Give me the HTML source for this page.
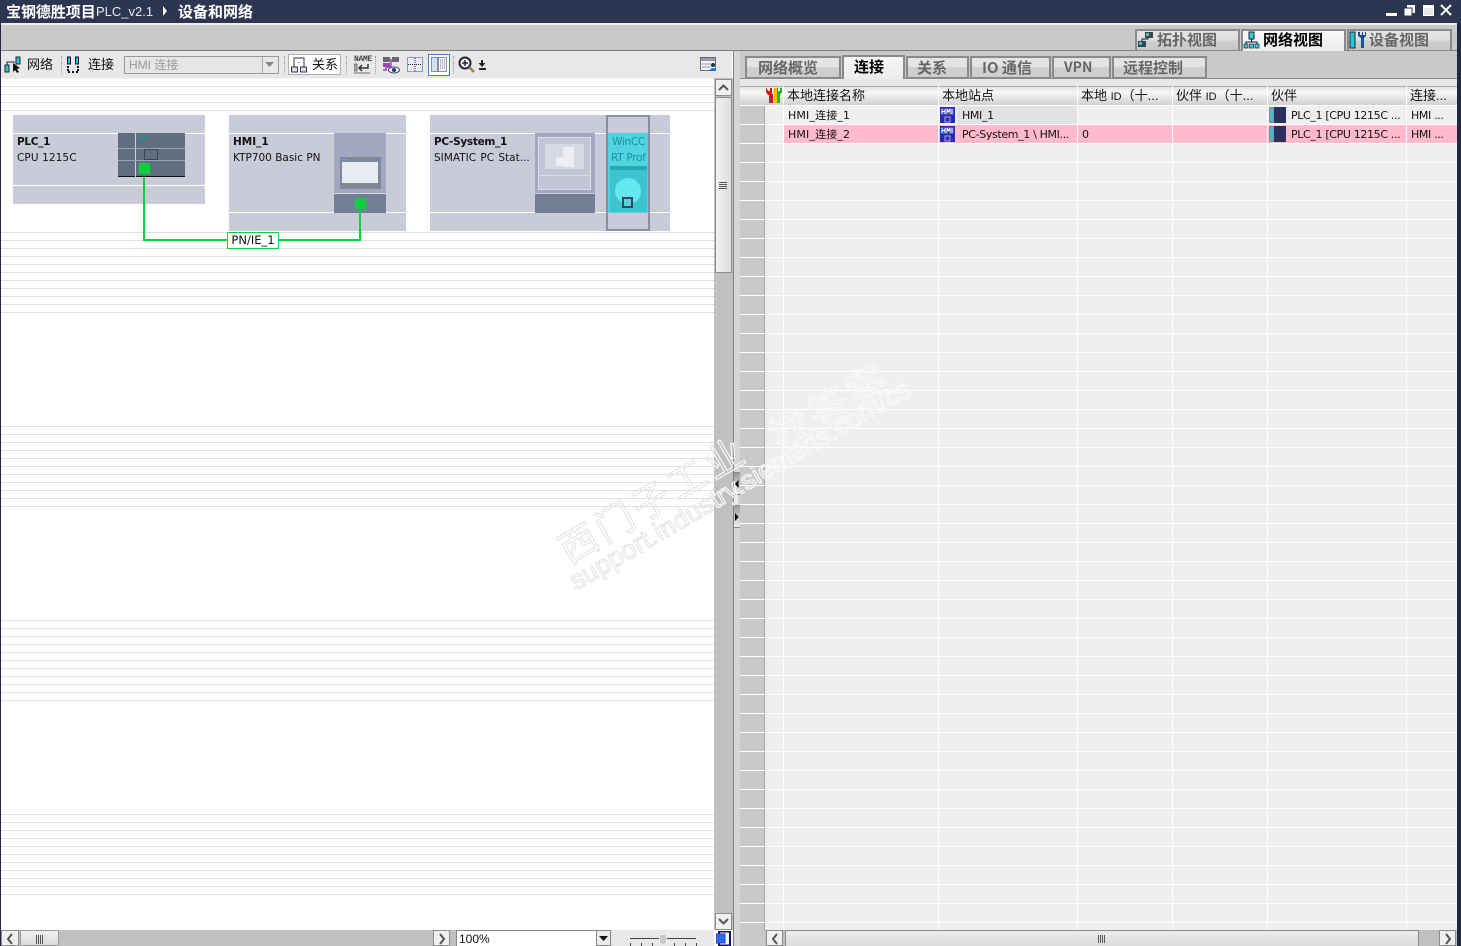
<!DOCTYPE html>
<html><head><meta charset="utf-8">
<style>
html,body{margin:0;padding:0;width:1461px;height:946px;overflow:hidden;background:#fff}
body{position:relative;font-family:"Liberation Sans","WenQuanYi Zen Hei","Noto Sans CJK SC",sans-serif;font-size:12px;color:#000}
div,span,svg{position:absolute;white-space:nowrap;box-sizing:border-box}
.hd span{position:static;font-size:11px}
.tab{background:linear-gradient(#e4e4e4,#e4e4e4 45%,#cfcfcf 50%,#cdcdcd);border:2px solid #8a8a8a;border-bottom-width:1px;color:#666;font-weight:bold;font-size:15px;text-align:left;padding-left:10px;line-height:19px;font-family:"WenQuanYi Zen Hei","Noto Sans CJK SC",sans-serif}
.tab.on{background:linear-gradient(#f6f6f6,#ececec);color:#000;border-bottom:none}
.tt{background:linear-gradient(#e4e4e4,#e0e0e0 45%,#cfcfcf 55%,#c8c8c8);border:2px solid #8a8a8a;border-bottom-width:1px;color:#666;font-weight:bold;font-size:15px;line-height:18px;font-family:"WenQuanYi Zen Hei","Noto Sans CJK SC",sans-serif}
.lines{left:1px;width:713px;height:82px;background:repeating-linear-gradient(#e0e0e0 0,#e0e0e0 1px,#fff 1px,#fff 8px)}
.node{background:#cacbd8}
.hl{height:1px;background:#fff}
.nm{font-family:"DejaVu Sans",sans-serif;font-size:10.5px;color:#111}
.nb{font-weight:bold;letter-spacing:-.3px}
.hd{top:86px;height:19px;line-height:20px;font-size:13px;padding-left:3px;color:#111;border-left:1px solid #fff;overflow:hidden}
.c{font-size:11px;line-height:19px;color:#111;font-family:"DejaVu Sans","WenQuanYi Zen Hei",sans-serif;letter-spacing:-.35px}
.btn{background:#f0f0f0;border:1px solid #8c8c8c}
.wm{-webkit-text-stroke:1.2px #e6e6e6;color:transparent;font-family:"Liberation Sans","WenQuanYi Zen Hei",sans-serif;transform:rotate(-30.3deg);transform-origin:0 0}
.w1{font-size:38px;letter-spacing:4px;line-height:40px}
.w2{font-size:40px;letter-spacing:4px;line-height:40px}
.w3{font-size:26.5px;line-height:30px;letter-spacing:.2px}
.wr{-webkit-text-stroke-color:#f9f9f9}
.sep{top:56px;height:18px;width:1px;border-left:1px dotted #999}
.tl{top:56px;font-size:13px;line-height:17px;color:#111}
</style></head>
<body>
<!-- title bar -->
<div style="left:0;top:0;width:1461px;height:23px;background:#2d3650"></div>
<div style="left:6px;top:2px;color:#fff;font-size:15px;line-height:19px;font-weight:bold;font-family:'WenQuanYi Zen Hei','Noto Sans CJK SC',sans-serif;letter-spacing:-.05px">宝钢德胜项目</div>
<div style="left:96px;top:2px;color:#e8edf8;font-size:13px;line-height:19px">PLC_v2.1</div>
<svg style="left:162px;top:6px" width="6" height="10"><path d="M1 0l4 5-4 5z" fill="#fff"/></svg>
<div style="left:178px;top:2px;color:#fff;font-size:15px;line-height:19px;font-weight:bold;font-family:'WenQuanYi Zen Hei','Noto Sans CJK SC',sans-serif">设备和网络</div>
<svg style="left:1385px;top:4px" width="70" height="14">
<rect x="1" y="9" width="11" height="3" fill="#fff"/>
<rect x="22" y="1" width="8" height="8" fill="#fff"/><rect x="19" y="4" width="8" height="8" fill="#fff" stroke="#2d3650"/>
<rect x="38" y="1" width="11" height="11" fill="#fff"/><rect x="39" y="4" width="9" height="7" fill="#e8e8e8"/>
<path d="M56 1l10 10M66 1L56 11" stroke="#fff" stroke-width="2"/>
</svg>
<!-- upper gray band -->
<div style="left:0;top:23px;width:1457px;height:2px;background:#efefef"></div>
<div style="left:0;top:25px;width:1457px;height:25px;background:#c9c9c9"></div>
<div style="left:0;top:50px;width:1457px;height:1px;background:#7f7f7f"></div>
<!-- top tabs -->
<div class="tt" style="left:1135px;top:29px;width:105px;height:22px;padding-left:20px">拓扑视图</div>
<div class="tt" style="left:1241px;top:29px;width:105px;height:23px;padding-left:20px;background:linear-gradient(#f8f8f8,#ececec);color:#000;border-bottom:none">网络视图</div>
<div class="tt" style="left:1347px;top:29px;width:105px;height:22px;padding-left:20px">设备视图</div>
<svg style="left:1137px;top:31px" width="18" height="18"><rect x="8" y="1" width="8" height="6" fill="#444"/><rect x="9" y="2" width="3" height="3" fill="#3cc"/><rect x="1" y="10" width="8" height="6" fill="#345"/><rect x="2" y="11" width="3" height="3" fill="#3cc"/><path d="M5 10V8h6V7" stroke="#114" fill="none"/></svg>
<svg style="left:1243px;top:31px" width="18" height="18"><rect x="6" y="1" width="5" height="7" fill="#3cc" stroke="#224"/><path d="M8.500 8v3M3 14v-3h11v3" stroke="#114" fill="none"/><rect x="1" y="13" width="4" height="4" fill="#3cc" stroke="#224" stroke-width=".7"/><rect x="6.500" y="13" width="4" height="4" fill="#3cc" stroke="#224" stroke-width=".7"/><rect x="12" y="13" width="4" height="4" fill="#3cc" stroke="#224" stroke-width=".7"/></svg>
<svg style="left:1349px;top:30px" width="18" height="19"><rect x="1" y="2" width="5" height="16" fill="#20c8d8" stroke="#223"/><path d="M9 2v4l3 2v10h3V8l2-2V2l-1 0v3h-2V2h-1v3h-2V2z" fill="#1650a0"/></svg>
<!-- left toolbar -->
<div style="left:1px;top:51px;width:731px;height:27px;background:#e8e8e8"></div>
<div style="left:1px;top:78px;width:713px;height:1px;background:#f4f4f4"></div>
<svg style="left:4px;top:56px" width="18" height="18"><rect x="12" y="1" width="4" height="7" fill="#2cc" stroke="#223"/><rect x="1" y="9" width="4" height="7" fill="#2cc" stroke="#223"/><path d="M3 9V6h8" stroke="#223" fill="none"/><path d="M9 7l7 5-3 1 2 3-2 1-2-3-2 2z" fill="#111"/></svg>
<div class="tl" style="left:27px">网络</div>
<div class="sep" style="left:61px"></div>
<svg style="left:66px;top:56px" width="15" height="18"><rect x="1.500" y="1" width="3" height="7" fill="#2cc" stroke="#113"/><rect x="9.500" y="1" width="3" height="7" fill="#2cc" stroke="#113"/><path d="M2 10v6h3M12 10v6h-3M6 16h2" stroke="#113" stroke-width="2" stroke-dasharray="2 1" fill="none"/></svg>
<div class="tl" style="left:88px">连接</div>
<div style="left:124px;top:56px;width:155px;height:18px;background:#e6e6e6;border:1px solid #9a9a9a;color:#9a9a9a;font-size:12px;line-height:16px;padding-left:4px">HMI 连接</div>
<div style="left:262px;top:57px;width:16px;height:16px;background:#e8e8e8;border-left:1px solid #aaa"></div>
<svg style="left:265px;top:62px" width="10" height="6"><path d="M0 0h9L4.500 5z" fill="#888"/></svg>
<div class="sep" style="left:284px"></div>
<div style="left:288px;top:54px;width:53px;height:21px;background:#fff;border:1px solid #b0b0b0"></div>
<svg style="left:290px;top:56px" width="18" height="18"><path d="M9 6v1M4 11V2h10v9" stroke="#334" fill="none"/><rect x="1.500" y="11" width="6" height="5" fill="#dde" stroke="#334"/><rect x="10.500" y="11" width="6" height="5" fill="#dde" stroke="#334"/></svg>
<div class="tl" style="left:312px">关系</div>
<div class="sep" style="left:346px"></div>
<div style="left:354px;top:56px;font:bold 8px/8px 'Liberation Mono',monospace;color:#444;letter-spacing:-.3px">NAME</div>
<svg style="left:354px;top:63px" width="17" height="11"><rect x="0" y="1" width="3" height="7" fill="#aaa" stroke="#555" stroke-width=".7"/><path d="M14 1v4H6M8 2L5 5l3 3" stroke="#333" stroke-width="1.500" fill="none"/><rect x="0" y="9" width="16" height="2" fill="#aaa"/></svg>
<div class="sep" style="left:375px"></div>
<svg style="left:382px;top:56px" width="18" height="18"><rect x="1" y="1" width="7" height="5" fill="#667"/><rect x="10" y="1" width="7" height="5" fill="#667"/><rect x="1" y="7" width="7" height="4" fill="#a040c0"/><path d="M4 11v3h-3M9 3v8H4" stroke="#a040c0" stroke-width="1.500" fill="none"/><ellipse cx="12" cy="14" rx="5.500" ry="3" fill="#fff" stroke="#445"/><circle cx="12" cy="14" r="2" fill="#1030a0"/></svg>
<svg style="left:406px;top:57px" width="18" height="16"><rect x="1.500" y=".5" width="15" height="14" fill="#e8edf6" stroke="#8a9ac0"/><path d="M2 7.500h14M9 1v13" stroke="#223" stroke-dasharray="1 1"/></svg>
<div style="left:428px;top:54px;width:22px;height:22px;background:#fff;border:1px solid #4a78c8"></div>
<svg style="left:431px;top:57px" width="16" height="16"><rect x=".5" y=".5" width="15" height="14" fill="#f4f6fa" stroke="#7f90b8"/><rect x="1" y="1" width="6" height="13" fill="#d4e0f4"/><path d="M7 .5v14" stroke="#334"/><path d="M9 3h5M9 5h5M9 7h5M9 9h5M9 11h5" stroke="#778" stroke-dasharray="1 1"/></svg>
<div class="sep" style="left:453px"></div>
<svg style="left:458px;top:56px" width="18" height="18"><circle cx="7" cy="7" r="5.500" fill="#fff" stroke="#223" stroke-width="2"/><path d="M4 7h6M7 4v6" stroke="#223" stroke-width="1.500"/><path d="M11 11l5 5" stroke="#a08040" stroke-width="2.500"/></svg>
<svg style="left:478px;top:60px" width="9" height="11"><path d="M3 0h2v3h2.500L4 7 .5 3H3z" fill="#222"/><rect x="1" y="8" width="7" height="2" fill="#222"/></svg>
<svg style="left:700px;top:57px" width="18" height="16"><rect x=".5" y=".5" width="15" height="13" fill="#f0f2fa" stroke="#667"/><rect x="1" y="1" width="14" height="3" fill="#99a"/><path d="M2 7h9M2 10h9" stroke="#99a"/><circle cx="13" cy="8" r="2" fill="#234"/><path d="M10 14c0-4 6-4 6 0z" fill="#1878c0"/></svg>
<!-- canvas background lines -->
<div style="left:1px;top:79px;width:713px;height:851px;background:#fff"></div>
<div class="lines" style="top:86px;height:25px"></div>
<div class="lines" style="top:232px"></div>
<div class="lines" style="top:426px"></div>
<div class="lines" style="top:620px"></div>
<div class="lines" style="top:814px"></div>
<!-- PLC node -->
<div class="node" style="left:13px;top:115px;width:192px;height:89px"></div>
<div class="hl" style="left:13px;top:133px;width:192px"></div>
<div class="hl" style="left:13px;top:185px;width:192px"></div>
<div class="nm nb" style="left:17px;top:136px">PLC_1</div>
<div class="nm" style="left:17px;top:152px;letter-spacing:.1px">CPU 1215C</div>
<div style="left:118px;top:133px;width:67px;height:44px;background:#5f6f80;border-bottom:1px solid #111"></div>
<div style="left:135px;top:133px;width:1px;height:44px;background:#d0d4da"></div>
<div style="left:118px;top:148px;width:67px;height:1px;background:#9aa4b0"></div>
<div style="left:118px;top:160px;width:67px;height:1px;background:#9aa4b0"></div>
<div style="left:144px;top:149px;width:14px;height:11px;border:1px solid #3c4650"></div>
<div style="left:139px;top:137px;width:8px;height:2px;background:#1d9a98"></div>
<!-- HMI node -->
<div class="node" style="left:229px;top:115px;width:177px;height:116px"></div>
<div class="hl" style="left:229px;top:133px;width:177px"></div>
<div class="hl" style="left:229px;top:212px;width:177px"></div>
<div class="nm nb" style="left:233px;top:136px;letter-spacing:0">HMI_1</div>
<div class="nm" style="left:233px;top:152px">KTP700 Basic PN</div>
<div style="left:334px;top:133px;width:52px;height:60px;background:#a3a7bf"></div>
<div style="left:334px;top:193px;width:52px;height:1px;background:#d4d6e0"></div>
<div style="left:334px;top:194px;width:52px;height:19px;background:#737d95"></div>
<div style="left:340px;top:157px;width:41px;height:32px;background:#7f8a98"></div>
<div style="left:342px;top:162px;width:36px;height:21px;background:#e9ebf2"></div>
<div style="left:342px;top:159px;width:6px;height:1px;background:#3bd"></div>
<!-- PC node -->
<div class="node" style="left:430px;top:115px;width:240px;height:116px"></div>
<div class="hl" style="left:430px;top:133px;width:240px"></div>
<div class="hl" style="left:430px;top:212px;width:240px"></div>
<div class="nm nb" style="left:434px;top:136px">PC-System_1</div>
<div class="nm" style="left:434px;top:152px;word-spacing:1px">SIMATIC PC Stat...</div>
<div style="left:535px;top:133px;width:60px;height:60px;background:#a3a7bf"></div>
<div style="left:538px;top:137px;width:53px;height:39px;background:#c3c5d6;border:1px solid #dcdde6"></div>
<div style="left:538px;top:175px;width:53px;height:15px;background:#c3c5d6;border:1px solid #dcdde6"></div>
<div style="left:545px;top:144px;width:39px;height:25px;background:#d6d8e4"></div>
<div style="left:563px;top:147px;width:11px;height:20px;background:#eceef4"></div>
<div style="left:556px;top:157px;width:10px;height:9px;background:#eceef4"></div>
<div style="left:535px;top:194px;width:60px;height:19px;background:#737d95"></div>
<div style="left:606px;top:115px;width:44px;height:116px;border:2px solid #8a90a4"></div>
<div style="left:608px;top:133px;width:40px;height:80px;background:#50d4e0"></div>
<div class="nm" style="left:612px;top:136px;color:#1f8f9f;letter-spacing:-.3px">WinCC</div>
<div class="nm" style="left:611px;top:152px;color:#1f8f9f;letter-spacing:-.3px">RT Prof</div>
<div style="left:610px;top:166px;width:37px;height:4px;background:#28a8b0"></div>
<div style="left:610px;top:170px;width:37px;height:42px;background:#3cc4d0"></div>
<div style="left:615px;top:178px;width:26px;height:26px;border-radius:50%;background:#64e8f0"></div>
<div style="left:622px;top:197px;width:11px;height:11px;border:2px solid #3c4658;background:#50d4e0"></div>
<!-- network -->
<div style="left:143px;top:177px;width:2px;height:64px;background:#0fd03c"></div>
<div style="left:143px;top:239px;width:218px;height:2px;background:#0fd03c"></div>
<div style="left:359px;top:210px;width:2px;height:31px;background:#0fd03c"></div>
<div style="left:139px;top:163px;width:11px;height:11px;background:#0fd03c"></div>
<div style="left:355px;top:198px;width:11px;height:11px;background:#0fd03c"></div>
<div style="left:227px;top:232px;width:52px;height:17px;background:#fff;border:1px solid #0fd03c;font:11.5px/15px 'DejaVu Sans',sans-serif;text-align:center;color:#111">PN/IE_1</div>
<!-- vertical scrollbar -->
<div style="left:714px;top:78px;width:19px;height:852px;background:#c0c0c0"></div>
<div class="btn" style="left:715px;top:79px;width:17px;height:17px"></div>
<svg style="left:718px;top:84px" width="11" height="7"><path d="M1 6l4.500-4.500L10 6" stroke="#555" stroke-width="2" fill="none"/></svg>
<div style="left:715px;top:97px;width:17px;height:176px;background:linear-gradient(90deg,#f2f2f2,#dcdcdc);border:1px solid #8c8c8c"></div>
<div style="left:719px;top:182px;width:8px;height:7px;background:repeating-linear-gradient(#555 0,#555 1px,transparent 1px,transparent 2px)"></div>
<div class="btn" style="left:715px;top:913px;width:17px;height:17px"></div>
<svg style="left:718px;top:918px" width="11" height="7"><path d="M1 1l4.500 4.500L10 1" stroke="#555" stroke-width="2" fill="none"/></svg>
<!-- splitter -->
<div style="left:733px;top:51px;width:1px;height:895px;background:#808080"></div>
<div style="left:734px;top:51px;width:6px;height:895px;background:#d6d6d6"></div>
<div style="left:734px;top:472px;width:6px;height:23px;background:linear-gradient(#999,#eee);border-top:1px solid #888;border-bottom:1px solid #888"></div>
<div style="left:734px;top:505px;width:6px;height:23px;background:linear-gradient(#999,#eee);border-bottom:1px solid #888"></div>
<svg style="left:735px;top:480px" width="4" height="8"><path d="M3.500 0v8L0 4z" fill="#000"/></svg>
<svg style="left:735px;top:513px" width="4" height="8"><path d="M0 0v8l3.500-4z" fill="#000"/></svg>
<!-- right tab strip -->
<div style="left:740px;top:51px;width:717px;height:27px;background:#c9c9c9"></div>
<div style="left:740px;top:78px;width:717px;height:8px;background:#e8e8e8"></div>
<div style="left:740px;top:78px;width:717px;height:1px;background:#8a8a8a"></div>
<div class="tab" style="left:745px;top:56px;width:96px;height:22px;padding-left:11px">网络概览</div>
<div class="tab on" style="left:842px;top:55px;width:63px;height:24px">连接</div>
<div class="tab" style="left:906px;top:56px;width:63px;height:22px;padding-left:9px">关系</div>
<div class="tab" style="left:970px;top:56px;width:81px;height:22px">IO 通信</div>
<div class="tab" style="left:1052px;top:56px;width:59px;height:22px;font-size:14px">VPN</div>
<div class="tab" style="left:1112px;top:56px;width:95px;height:22px;padding-left:9px">远程控制</div>
<!-- table -->
<div style="left:740px;top:86px;width:717px;height:844px;background:#efefef"></div>
<div style="left:740px;top:105px;width:25px;height:825px;background:#c9c9c9;border-right:1px solid #a8a8a8"></div>
<div style="left:740px;top:105px;width:717px;height:825px;background:repeating-linear-gradient(#fff 0,#fff 1px,transparent 1px,transparent 19px)"></div>
<div style="left:783px;top:105px;width:1px;height:825px;background:#fff"></div>
<div style="left:938px;top:105px;width:1px;height:825px;background:#fff"></div>
<div style="left:1077px;top:105px;width:1px;height:825px;background:#fff"></div>
<div style="left:1172px;top:105px;width:1px;height:825px;background:#fff"></div>
<div style="left:1267px;top:105px;width:1px;height:825px;background:#fff"></div>
<div style="left:1406px;top:105px;width:1px;height:825px;background:#fff"></div>
<div style="left:740px;top:86px;width:717px;height:19px;background:linear-gradient(#e4e4e4,#f6f6f6 30%,#d0d0d0);border-top:1px solid #a8a8a8"></div>
<svg style="left:765px;top:87px" width="18" height="17"><path d="M1 2c0 3 1 4 3 5v9h4V7" fill="#d01818"/><path d="M2 1v3h3V1h2v4l-1 3H3L1 5V1z" fill="#d01818"/><path d="M8 5l1-4h3l1 5-1 2v8H9V8z" fill="#f0c000"/><path d="M12 1h1v3h2V1h2v4l-2 3v8h-3z" fill="#30b030"/></svg>
<div class="hd" style="left:783px;width:155px">本地连接名称</div>
<div class="hd" style="left:938px;width:139px">本地站点</div>
<div class="hd" style="left:1077px;width:95px">本地 <span>ID</span>（十...</div>
<div class="hd" style="left:1172px;width:95px">伙伴 <span>ID</span>（十...</div>
<div class="hd" style="left:1267px;width:139px">伙伴</div>
<div class="hd" style="left:1406px;width:51px">连接...</div>
<!-- rows -->
<div style="left:957px;top:106px;width:120px;height:18px;background:#e2e2e2"></div>
<div style="left:784px;top:125px;width:154px;height:18px;background:#ffbbcc"></div>
<div style="left:939px;top:125px;width:138px;height:18px;background:#ffbbcc"></div>
<div style="left:1078px;top:125px;width:94px;height:18px;background:#ffbbcc"></div>
<div style="left:1173px;top:125px;width:94px;height:18px;background:#ffbbcc"></div>
<div style="left:1268px;top:125px;width:138px;height:18px;background:#ffbbcc"></div>
<div style="left:1407px;top:125px;width:50px;height:18px;background:#ffbbcc"></div>
<div class="c" style="left:788px;top:106px;letter-spacing:.15px">HMI_连接_1</div>
<div class="c" style="left:788px;top:125px;letter-spacing:.15px">HMI_连接_2</div>
<div class="c" style="left:962px;top:106px">HMI_1</div>
<div class="c" style="left:962px;top:125px">PC-System_1 \ HMI...</div>
<div class="c" style="left:1082px;top:125px">0</div>
<div class="c" style="left:1291px;top:106px">PLC_1 [CPU 1215C ...</div>
<div class="c" style="left:1291px;top:125px">PLC_1 [CPU 1215C ...</div>
<div class="c" style="left:1411px;top:106px">HMI ...</div>
<div class="c" style="left:1411px;top:125px">HMI ...</div>
<svg style="left:940px;top:107px" width="15" height="16"><rect width="15" height="16" fill="#2a2ab8"/><rect x="1" y="1" width="13" height="7" fill="#4848d8"/><path d="M2 2v5M5 2v5M2 4.500h3M7 7V2l1.500 3L10 2v5M12 2v5" stroke="#fff"/><rect x="5" y="10" width="5" height="5" fill="#2a2ab8" stroke="#aac"/></svg>
<svg style="left:940px;top:126px" width="15" height="16"><rect width="15" height="16" fill="#2a2ab8"/><rect x="1" y="1" width="13" height="7" fill="#4848d8"/><path d="M2 2v5M5 2v5M2 4.500h3M7 7V2l1.500 3L10 2v5M12 2v5" stroke="#fff"/><rect x="5" y="10" width="5" height="5" fill="#2a2ab8" stroke="#aac"/></svg>
<svg style="left:1269px;top:107px" width="17" height="16"><rect width="17" height="16" fill="#2a3060"/><rect x="0" y="0" width="5" height="16" fill="#8a90a0"/><rect x="1.500" y="2" width="2.500" height="12" fill="#30c8d8"/></svg>
<svg style="left:1269px;top:126px" width="17" height="16"><rect width="17" height="16" fill="#2a3060"/><rect x="0" y="0" width="5" height="16" fill="#8a90a0"/><rect x="1.500" y="2" width="2.500" height="12" fill="#30c8d8"/></svg>
<!-- bottom left bar -->
<div style="left:1px;top:930px;width:713px;height:16px;background:#c0c0c0"></div>
<div class="btn" style="left:1px;top:930px;width:18px;height:16px"></div>
<svg style="left:6px;top:933px" width="8" height="12"><path d="M6 1L2 6l4 5" stroke="#555" stroke-width="2" fill="none"/></svg>
<div style="left:20px;top:930px;width:39px;height:16px;background:linear-gradient(#f0f0f0,#dcdcdc);border:1px solid #999"></div>
<div style="left:36px;top:935px;width:7px;height:9px;background:repeating-linear-gradient(90deg,#555 0,#555 1px,transparent 1px,transparent 2px)"></div>
<div class="btn" style="left:433px;top:930px;width:17px;height:16px"></div>
<svg style="left:438px;top:933px" width="8" height="12"><path d="M2 1l4 5-4 5" stroke="#555" stroke-width="2" fill="none"/></svg>
<div style="left:456px;top:930px;width:141px;height:16px;background:#fff;border:1px solid #888;border-bottom:none;font-size:12px;line-height:16px;padding-left:2px;color:#111">100%</div>
<div style="left:596px;top:930px;width:15px;height:16px;background:#ececec;border:1px solid #888"></div>
<svg style="left:599px;top:936px" width="9" height="6"><path d="M0 0h9L4.500 5z" fill="#111"/></svg>
<div style="left:611px;top:930px;width:103px;height:16px;background:#e8e8e8"></div>
<div style="left:630px;top:938px;width:66px;height:1px;background:#444"></div>
<svg style="left:630px;top:933px" width="67" height="13"><path d="M0.500 10v3M11.500 10v3M22.500 10v3M44.500 10v3M55.500 10v3M66.500 10v3" stroke="#444"/><path d="M29.500 1.500h7v8l-3.500 3-3.500-3z" fill="#c8c8c8" stroke="#eee"/></svg>
<svg style="left:716px;top:931px" width="16" height="15"><rect x="3" y="0.500" width="11" height="14" fill="#f4f4f4" stroke="#14146a" stroke-width="2"/><rect x="0" y="3" width="9" height="9" fill="#3068f0" stroke="#2040c0"/></svg>
<!-- bottom right bar -->
<div style="left:740px;top:930px;width:717px;height:16px;background:#c0c0c0"></div>
<div style="left:740px;top:930px;width:25px;height:16px;background:#c9c9c9"></div>
<div class="btn" style="left:766px;top:930px;width:17px;height:16px"></div>
<svg style="left:771px;top:933px" width="8" height="12"><path d="M6 1L2 6l4 5" stroke="#555" stroke-width="2" fill="none"/></svg>
<div style="left:785px;top:930px;width:634px;height:16px;background:linear-gradient(#ececec,#dcdcdc);border:1px solid #8c8c8c;border-bottom:none"></div>
<div style="left:1098px;top:935px;width:7px;height:8px;background:repeating-linear-gradient(90deg,#555 0,#555 1px,transparent 1px,transparent 2px)"></div>
<div class="btn" style="left:1439px;top:930px;width:17px;height:16px"></div>
<svg style="left:1444px;top:933px" width="8" height="12"><path d="M2 1l4 5-4 5" stroke="#555" stroke-width="2" fill="none"/></svg>
<!-- edges -->
<div style="left:0;top:23px;width:1px;height:923px;background:#1f2840"></div>
<div style="left:1457px;top:23px;width:4px;height:923px;background:#1f2840"></div>
<!-- watermark -->
<div style="left:0;top:0;width:714px;height:946px;overflow:hidden">
<div class="wm w1" style="left:553px;top:537px">西门子工业</div>
<div class="wm w2" style="left:764px;top:424px">找答案</div>
<div class="wm w3" style="left:564px;top:570px">support.industry.siemens.com/cs</div>
</div>
<div style="left:714px;top:0;width:743px;height:946px;overflow:hidden">
<div class="wm w1 wr" style="left:-161px;top:537px">西门子工业</div>
<div class="wm w2 wr" style="left:50px;top:424px">找答案</div>
<div class="wm w3 wr" style="left:-150px;top:570px">support.industry.siemens.com/cs</div>
</div>
</body></html>
